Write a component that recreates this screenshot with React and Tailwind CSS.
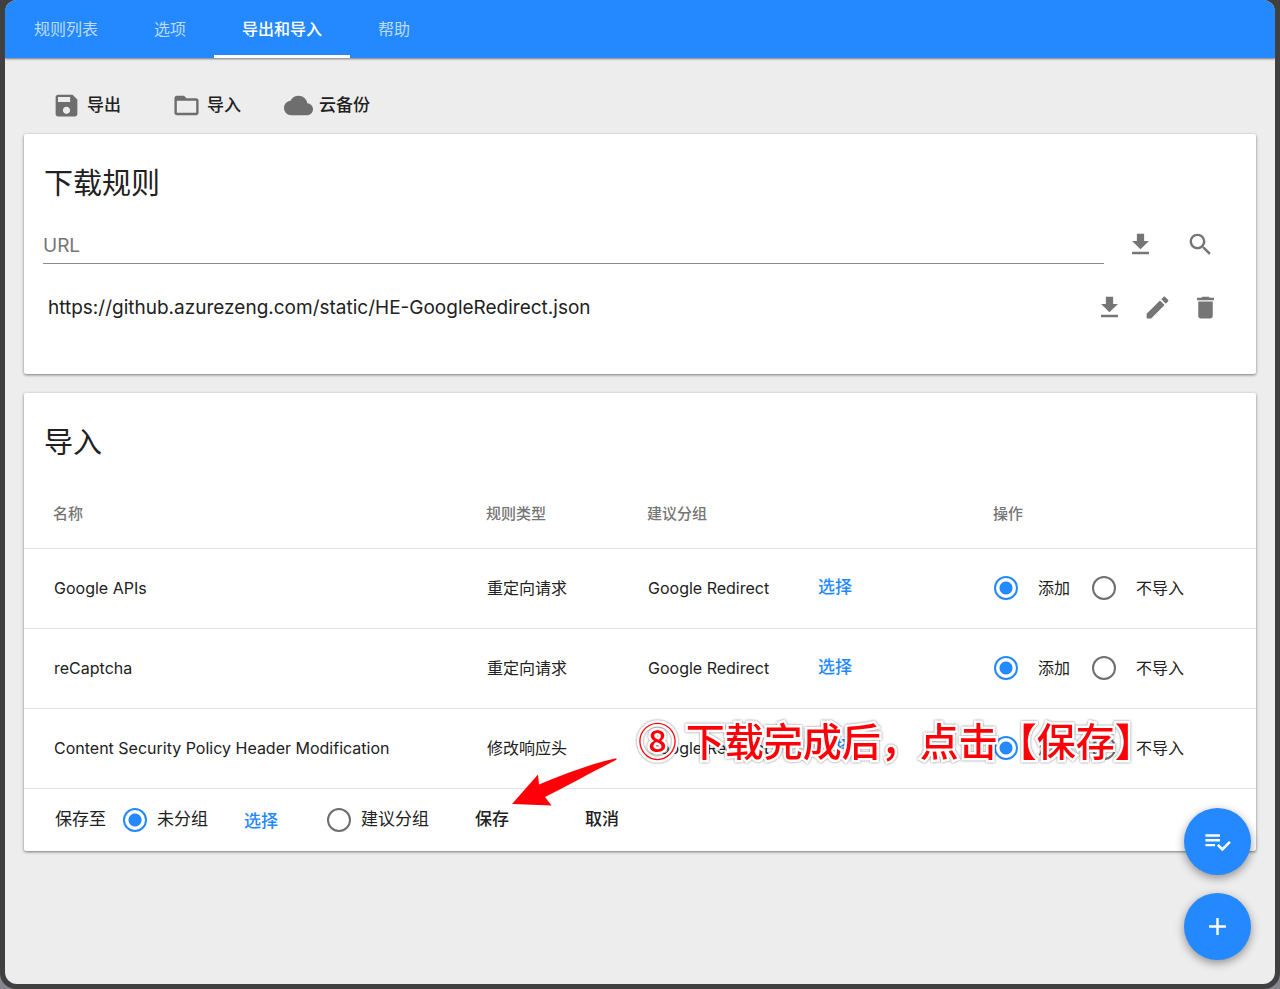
import React from "react";

const ICONS = {
  save: "M17 3H5c-1.11 0-2 .9-2 2v14c0 1.1.89 2 2 2h14c1.1 0 2-.9 2-2V7l-4-4zm-5 16c-1.66 0-3-1.34-3-3s1.34-3 3-3 3 1.34 3 3-1.34 3-3 3zm3-10H5V5h10v4z",
  folder:
    "M20 6h-8l-2-2H4c-1.1 0-1.99.9-1.99 2L2 18c0 1.1.9 2 2 2h16c1.1 0 2-.9 2-2V8c0-1.1-.9-2-2-2zm0 12H4V8h16v10z",
  cloud:
    "M19.35 10.04C18.67 6.59 15.64 4 12 4 9.11 4 6.6 5.64 5.35 8.04 2.34 8.36 0 10.91 0 14c0 3.31 2.69 6 6 6h13c2.76 0 5-2.24 5-5 0-2.64-2.05-4.78-4.65-4.96z",
  download: "M19 9h-4V3H9v6H5l7 7 7-7zM5 18v2h14v-2H5z",
  search:
    "M15.5 14h-.79l-.28-.27C15.41 12.59 16 11.11 16 9.5 16 5.91 13.09 3 9.5 3S3 5.91 3 9.5 5.91 16 9.5 16c1.61 0 3.09-.59 4.23-1.57l.27.28v.79l5 4.99L20.49 19l-4.99-5zm-6 0C7.01 14 5 11.99 5 9.5S7.01 5 9.5 5 14 7.01 14 9.5 11.99 14 9.5 14z",
  edit: "M3 17.25V21h3.75L17.81 9.94l-3.75-3.75L3 17.25zM20.71 7.04c.39-.39.39-1.02 0-1.41l-2.34-2.34c-.39-.39-1.02-.39-1.41 0l-1.83 1.83 3.75 3.75 1.83-1.83z",
  trash: "M6 19c0 1.1.9 2 2 2h8c1.1 0 2-.9 2-2V7H6v12zM19 4h-3.5l-1-1h-5l-1 1H5v2h14V4z",
  check:
    "M14 10H2v2h12v-2zm0-4H2v2h12V6zM2 16h8v-2H2v2zm19.5-4.5L23 13l-6.99 7-4.51-4.5L13 14l3.01 3 5.49-5.5z",
  add: "M19 13h-6v6h-2v-6H5v-2h6V5h2v6h6v2z",
};

function Icon({ name }) {
  return (
    <svg viewBox="0 0 24 24" className="size-[29px] shrink-0 fill-current" aria-hidden="true">
      <path d={ICONS[name]} />
    </svg>
  );
}

function IconButton({ name, label }) {
  return (
    <button type="button" aria-label={label} className="flex size-12 items-center justify-center text-[#757575]">
      <Icon name={name} />
    </button>
  );
}

function Radio({ id, name, defaultChecked }) {
  return (
    <input
      type="radio"
      id={id}
      name={name}
      defaultChecked={defaultChecked}
      className="size-6 shrink-0 appearance-none rounded-full border-2 border-[#6e6e6e] bg-white checked:border-[#2489ff] checked:bg-[radial-gradient(circle,#2489ff_6px,transparent_7px)]"
    />
  );
}

const TABS = ["规则列表", "选项", "导出和导入", "帮助"];

const RULES = [
  { name: "Google APIs", type: "重定向请求", group: "Google Redirect" },
  { name: "reCaptcha", type: "重定向请求", group: "Google Redirect" },
  { name: "Content Security Policy Header Modification", type: "修改响应头", group: "Google Redirect" },
];

function Header() {
  return (
    <header className="relative flex h-[58px] bg-[#2489ff] shadow-[0_1px_2px_rgba(0,0,0,0.5)]">
      <nav className="flex pl-px">
        {TABS.map((tab) => (
          <a
            key={tab}
            href="#"
            aria-current={tab === "导出和导入" ? "page" : undefined}
            className={
              tab === "导出和导入"
                ? "flex items-center border-b-3 border-white px-7 pt-[3px] text-base font-medium text-white"
                : "flex items-center px-7 text-base text-white/70"
            }
          >
            {tab}
          </a>
        ))}
      </nav>
    </header>
  );
}

function Toolbar() {
  return (
    <div className="flex h-[76px] items-end gap-x-2 pb-[14px] pl-7 text-[17px] font-medium">
      <button type="button" className="flex w-[112px] items-center gap-1.5">
        <span className="text-[#6e6e6e]"><Icon name="save" /></span>导出
      </button>
      <button type="button" className="flex w-[104px] items-center gap-1.5">
        <span className="text-[#6e6e6e]"><Icon name="folder" /></span>导入
      </button>
      <button type="button" className="flex items-center gap-1.5">
        <span className="text-[#6e6e6e]"><Icon name="cloud" /></span>云备份
      </button>
    </div>
  );
}

function DownloadCard() {
  return (
    <section className="h-60 rounded-xs bg-white pt-[30px] shadow-[0_1px_3px_rgba(0,0,0,0.5)]">
      <h2 className="pl-5 text-[29px] leading-10">下载规则</h2>
      <div className="mt-4 flex items-start pr-8 pl-[19px]">
        <input
          type="text"
          aria-label="URL"
          placeholder="URL"
          className="h-11 min-w-0 flex-1 border-b border-[#8a8a8a] bg-transparent pt-2 text-[19px] outline-none placeholder:text-[#757575]"
        />
        <div className="ml-3 flex gap-3">
          <IconButton name="download" label="下载" />
          <IconButton name="search" label="查看" />
        </div>
      </div>
      <div className="mt-[15px] flex items-center pr-[27px] pl-6">
        <span className="flex-1 pt-0.5 text-[19px]">https://github.azurezeng.com/static/HE-GoogleRedirect.json</span>
        <IconButton name="download" label="下载" />
        <IconButton name="edit" label="编辑" />
        <IconButton name="trash" label="删除" />
      </div>
    </section>
  );
}

function RuleRow({ rule, index }) {
  const name = `rule-${index}`;
  return (
    <tr className="h-20 border-b border-[#e0e0e0]">
      <td className="pl-[30px]">{rule.name}</td>
      <td className="pl-[30px]">{rule.type}</td>
      <td className="pl-[30px]">
        <div className="flex items-center">
          <span className="w-[170px]">{rule.group}</span>
          <button type="button" className="text-[17px] font-medium text-[#2489ff]">选择</button>
        </div>
      </td>
      <td className="pl-[30px]">
        <div className="flex items-center">
          <Radio id={`${name}-add`} name={name} defaultChecked />
          <label htmlFor={`${name}-add`} className="ml-5 w-[54px]">添加</label>
          <Radio id={`${name}-skip`} name={name} />
          <label htmlFor={`${name}-skip`} className="ml-5">不导入</label>
        </div>
      </td>
    </tr>
  );
}

function Annotation() {
  return (
    <div className="pointer-events-none absolute bottom-[44px] left-[488px] flex items-end">
      <svg viewBox="0 0 108 50" className="h-[50px] w-[108px] shrink-0" aria-hidden="true">
        <path
          d="M0 47 L26 17.500 L27 27.500 C50 18 78 7 103 1.500 Q106 1 104 3 C82 14 55 29 33 40 L39.500 48.500 Z"
          fill="#ff0008"
        />
      </svg>
      <p className="ml-[18px] pb-10 font-['Noto_Sans_CJK_SC',sans-serif] text-[39px] leading-[56px] font-medium whitespace-nowrap text-[#ff0008] [paint-order:stroke_fill] [-webkit-text-stroke:5px_white] [filter:drop-shadow(0_0_1px_rgba(0,0,0,0.5))]">
        ⑧ 下载完成后，点击【保存】
      </p>
    </div>
  );
}

function ImportCard() {
  return (
    <section className="relative mt-[19px] rounded-xs bg-white pt-[30px] shadow-[0_1px_3px_rgba(0,0,0,0.5)]">
      <h2 className="pl-5 text-[29px] leading-10">导入</h2>
      <table className="mt-[18px] w-full table-fixed border-collapse text-left text-base">
        <colgroup>
          <col />
          <col className="w-[161px]" />
          <col className="w-[346px]" />
          <col className="w-[292px]" />
        </colgroup>
        <thead>
          <tr className="h-[67px] border-b border-[#e0e0e0] text-[15px] text-[#757575]">
            {["名称", "规则类型", "建议分组", "操作"].map((title) => (
              <th key={title} scope="col" className="pl-[29px] font-medium">{title}</th>
            ))}
          </tr>
        </thead>
        <tbody>
          {RULES.map((rule, index) => (
            <RuleRow key={rule.name} rule={rule} index={index} />
          ))}
        </tbody>
      </table>
      <div className="flex h-[62px] items-center pl-[31px] text-[17px]">
        <span className="w-[68px]">保存至</span>
        <Radio id="save-none" name="save-to" defaultChecked />
        <label htmlFor="save-none" className="ml-[10px]">未分组</label>
        <button type="button" className="ml-9 pt-1 font-medium text-[#2489ff]">选择</button>
        <span className="w-[49px]" />
        <Radio id="save-suggested" name="save-to" />
        <label htmlFor="save-suggested" className="ml-[10px]">建议分组</label>
        <button type="button" className="ml-[46px] font-medium">保存</button>
        <button type="button" className="ml-[76px] font-medium">取消</button>
      </div>
      <Annotation />
    </section>
  );
}

function Fab({ name, label }) {
  return (
    <button
      type="button"
      aria-label={label}
      className="flex size-[67px] items-center justify-center rounded-full bg-[#2489ff] text-white shadow-[0_3px_10px_rgba(0,0,0,0.4)]"
    >
      <Icon name={name} />
    </button>
  );
}

export default function App() {
  return (
    <div className="flex min-h-screen bg-[#85858f] font-['Inter','Noto_Sans_CJK_SC',sans-serif] text-[#212121]" lang="zh-CN">
      <div className="flex flex-1 rounded-b-2xl bg-[#404040] px-[5px] pb-[5px]">
        <div className="relative flex-1 overflow-hidden rounded-xl bg-[#ededed]">
          <Header />
          <main className="px-[19px] pb-8">
            <Toolbar />
            <DownloadCard />
            <ImportCard />
          </main>
          <div className="absolute right-6 bottom-6 flex flex-col gap-[18px]">
            <Fab name="check" label="批量操作" />
            <Fab name="add" label="新增规则" />
          </div>
        </div>
      </div>
    </div>
  );
}
